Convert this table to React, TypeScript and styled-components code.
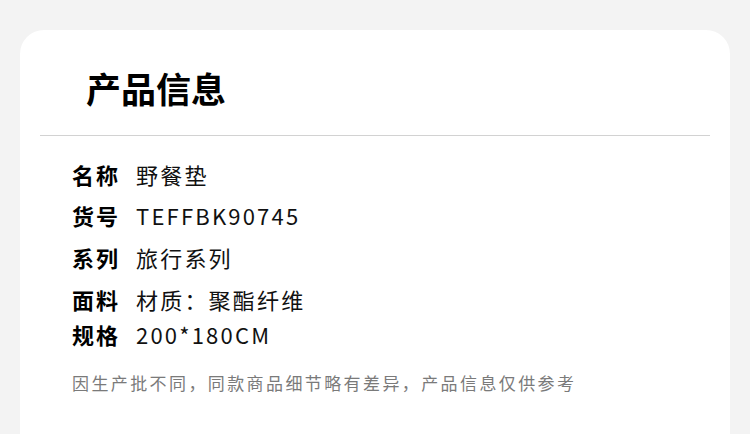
import React from 'react'
import styled, { createGlobalStyle } from 'styled-components'

const GlobalStyle = createGlobalStyle`
  html, body {
    margin: 0;
    padding: 0;
    background: #f3f3f3;
    font-family: "Noto Sans CJK SC", "Noto Sans", sans-serif;
  }
`

const specs = [
  { label: '名称', value: '野餐垫', space: 24 },
  { label: '货号', value: 'TEFFBK90745', space: 13 },
  { label: '系列', value: '旅行系列', space: 14 },
  { label: '面料', value: '材质：聚酯纤维', space: 13.5 },
  { label: '规格', value: '200*180CM', space: 7 },
]

const App: React.FC = () => {
  return (
    <>
      <GlobalStyle />
      <Page>
        <Card>
          <Header>
            <Title>产品信息</Title>
          </Header>
          <Divider />
          <SpecList>
            {specs.map((s) => (
              <SpecRow key={s.label} space={s.space}>
                <SpecLabel>{s.label}</SpecLabel>
                <SpecValue>{s.value}</SpecValue>
              </SpecRow>
            ))}
          </SpecList>
          <Note>因生产批不同，同款商品细节略有差异，产品信息仅供参考</Note>
        </Card>
      </Page>
    </>
  )
}

const Page = styled.div`
  width: 750px;
  height: 434px;
  overflow: hidden;
  padding: 30px 20px 0;
  box-sizing: border-box;
`

const Card = styled.div`
  background: #fff;
  border-radius: 24px;
  height: 440px;
  padding: 0 20px;
`

const Header = styled.div`
  height: 105px;
  display: flex;
  align-items: center;
  padding-left: 46px;
  padding-top: 10px;
  box-sizing: border-box;
`

const Title = styled.h1`
  margin: 0;
  font-size: 35px;
  font-weight: 700;
  color: #000;
  line-height: 1;
`

const Divider = styled.div`
  height: 1px;
  background: #d2d2d2;
`

const SpecList = styled.div`
  padding-left: 32px;
  display: flex;
  flex-direction: column;
`

const SpecRow = styled.div<{ space: number }>`
  display: flex;
  align-items: center;
  height: 28px;
  margin-top: ${(p) => p.space}px;
`

const SpecLabel = styled.span`
  font-size: 22px;
  font-weight: 700;
  letter-spacing: 2px;
  color: #000;
  width: 64px;
`

const SpecValue = styled.span`
  font-size: 22px;
  letter-spacing: 2.2px;
  color: #111;
`

const Note = styled.div`
  margin: 22px 0 0 32px;
  font-size: 17px;
  letter-spacing: 2.4px;
  color: #7a7a7a;
`

export default App
